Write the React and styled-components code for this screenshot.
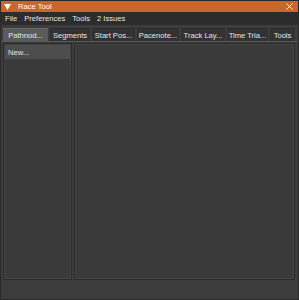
import React from "react";
import styled, { createGlobalStyle } from "styled-components";

const Global = createGlobalStyle`
  html, body { margin: 0; padding: 0; background: #3c3c3c; }
  body { font-family: "Liberation Sans", Arial, sans-serif; }
`;

const Window = styled.div`
  width: 299px;
  height: 300px;
  box-sizing: border-box;
  background: #3c3c3c;
  border: 1px solid #2a2a2a;
  display: flex;
  flex-direction: column;
  color: #e6e6e6;
  font-size: 7.6px;
  overflow: hidden;
`;

const TitleBar = styled.div`
  height: 11px;
  background: #c8662c;
  display: flex;
  align-items: center;
  padding: 0 5px 0 3px;
  color: #fff;
  gap: 7px;
`;

const Title = styled.span`
  flex: 1;
`;

const MenuBar = styled.div`
  height: 13px;
  background: #2c2c2c;
  display: flex;
  align-items: center;
  padding: 0 4px;
  gap: 7px;
`;

const TabRow = styled.div`
  display: flex;
  gap: 2px;
  padding: 3px 2px 0 2px;
  border-bottom: 1px solid #555;
`;

const Tab = styled.div`
  height: 13px;
  width: ${(p) => p.$w}px;
  box-sizing: border-box;
  display: flex;
  align-items: center;
  justify-content: center;
  background: ${(p) => (p.$active ? "#5a5a5a" : "#323232")};
  border-top: 1px solid ${(p) => (p.$active ? "#6a6a6a" : "#2a2a2a")};
  white-space: nowrap;
  flex: 0 0 auto;
`;

const Body = styled.div`
  flex: 1;
  display: flex;
  gap: 2px;
  padding: 1px 3px 19px 2px;
`;

const Panel = styled.div`
  background: #3a3a3a;
  border: 1px solid #2b2b2b;
  box-shadow: inset 0 0 0 1px #444;
  width: ${(p) => p.$w || "auto"};
  flex: ${(p) => (p.$w ? "0 0 auto" : "1")};
  display: flex;
  flex-direction: column;
  padding: 1px;
`;

const Button = styled.div`
  height: 14px;
  background: #4d4d4d;
  display: flex;
  align-items: center;
  padding: 0 3px;
`;

const Tri = () => (
  <svg width="7" height="6" viewBox="0 0 7 6">
    <path d="M0 0 H7 L3.5 6 Z" fill="#fff" />
  </svg>
);

const Close = () => (
  <svg width="7" height="7" viewBox="0 0 7 7">
    <path d="M0.5 0.5 L6.5 6.5 M6.5 0.5 L0.5 6.5" stroke="#fff" strokeWidth="1" />
  </svg>
);

const tabs = [
  ["Pathnod...", 45],
  ["Segments", 40],
  ["Start Pos...", 43],
  ["Pacenote...", 42],
  ["Track Lay...", 44],
  ["Time Tria...", 41],
  ["Tools", 25],
];

export default function App() {
  return (
    <>
      <Global />
      <Window>
        <TitleBar>
          <Tri />
          <Title>Race Tool</Title>
          <Close />
        </TitleBar>
        <MenuBar>
          <span>File</span>
          <span>Preferences</span>
          <span>Tools</span>
          <span>2 Issues</span>
        </MenuBar>
        <TabRow>
          {tabs.map(([t, w], i) => (
            <Tab key={t} $w={w} $active={i === 0}>{t}</Tab>
          ))}
        </TabRow>
        <Body>
          <Panel $w="65px">
            <Button>New...</Button>
          </Panel>
          <Panel />
        </Body>
      </Window>
    </>
  );
}
